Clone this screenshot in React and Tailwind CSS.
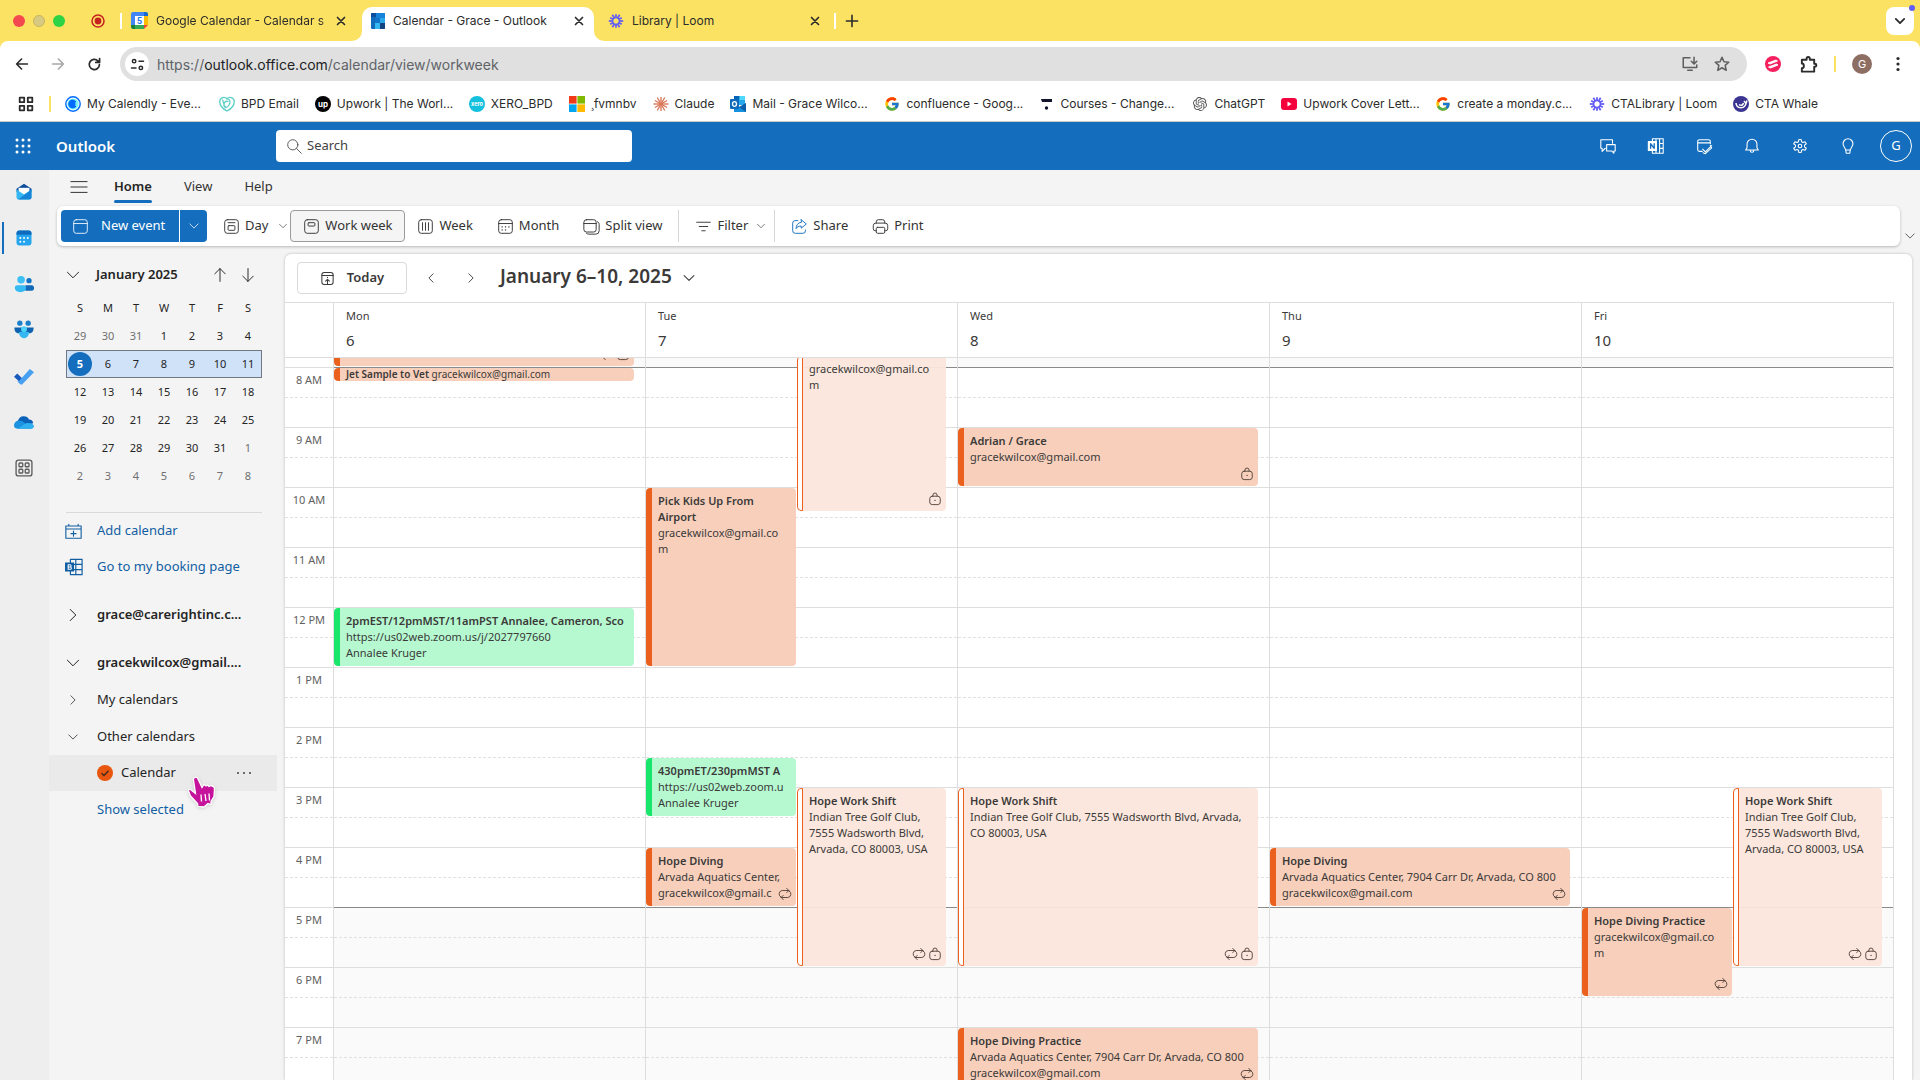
import { FcGoogle } from 'react-icons/fc';
import { SiOpenai } from 'react-icons/si';

// ---------- small shared svg helpers ----------

function Line({ size = 20, sw = 1, className = '', children }) {
    return (
        <svg width={size} height={size} viewBox="0 0 20 20" fill="none" stroke="currentColor" strokeWidth={sw} strokeLinecap="round" strokeLinejoin="round" className={`shrink-0 ${className}`} aria-hidden="true">
            {children}
        </svg>
    );
}

const Chevron = ({ dir = 'down', size = 16, sw = 1.25, className = '' }) => (
    <Line size={size} sw={sw} className={className}>
        {dir === 'down' && <path d="M3 6.5l7 7 7-7" />}
        {dir === 'right' && <path d="M6.5 3l7 7-7 7" />}
        {dir === 'left' && <path d="M13.5 3l-7 7 7 7" />}
    </Line>
);

const Cross = () => (
    <Line size={14} sw={2.4}><path d="M5 5l10 10M15 5L5 15" /></Line>
);

function Burst({ color, rays = 12, inner = 3.6, outer = 9, sw = 2.2, ring = false, size = 16 }) {
    return (
        <svg width={size} height={size} viewBox="-10 -10 20 20" stroke={color} strokeWidth={sw} fill="none" className="shrink-0" aria-hidden="true">
            {Array.from({ length: rays }, (_, i) => (
                <path key={i} d={`M0 ${-inner}V${i % 2 ? -outer : -outer + 0.6}`} transform={`rotate(${(i * 360) / rays})`} />
            ))}
            {ring && <circle r="4.3" strokeWidth="1.8" />}
        </svg>
    );
}

const LoomIcon = () => <Burst color="#625df5" ring />;
const ClaudeIcon = () => <Burst color="#d97757" inner={0} outer={9.4} sw={1.7} />;

const GoogleCalIcon = () => (
    <svg width="17" height="17" viewBox="0 0 17 17" className="shrink-0" aria-hidden="true">
        <path d="M0 2a2 2 0 012-2h11v4H4v9H0z" fill="#4285f4" />
        <path d="M13 0h2a2 2 0 012 2v2h-4z" fill="#1967d2" />
        <path d="M13 4h4v9h-4z" fill="#fbbc04" />
        <path d="M4 13h9v4H4z" fill="#34a853" />
        <path d="M0 13h4v4H2a2 2 0 01-2-2z" fill="#188038" />
        <path d="M13 13h4l-4 4z" fill="#ea4335" />
        <path d="M4 4h9v9H4z" fill="#fff" />
        <text x="8.5" y="11.8" textAnchor="middle" fontSize="9" fontWeight="700" fill="#1a73e8" fontFamily="Roboto, sans-serif">5</text>
    </svg>
);

const OutlookCalTabIcon = () => (
    <svg width="14" height="16" viewBox="0 0 14 16" className="shrink-0" aria-hidden="true">
        <rect width="14" height="16" rx="1" fill="#0f6cbd" />
        <path d="M0 1a1 1 0 011-1h4v4H0z" fill="#0a4f9e" />
        <path d="M5 0h8a1 1 0 011 1v4H5z" fill="#1683d8" />
        <path d="M9 5h5v5H9z" fill="#28a8ea" />
        <path d="M4 5h5v5H4z" fill="#1274c9" />
        <path d="M4 10h5v6H4z" fill="#35b8f1" />
        <path d="M9 10h5v5a1 1 0 01-1 1H9z" fill="#14447d" />
    </svg>
);

const CalendlyIcon = () => (
    <svg width="16" height="16" viewBox="0 0 16 16" fill="none" className="shrink-0" aria-hidden="true">
        <circle cx="8" cy="8" r="7.2" stroke="#006bff" strokeWidth="1.4" />
        <circle cx="8" cy="8" r="5.6" fill="#0ae8f0" opacity=".55" />
        <path d="M10.4 9.8A3.3 3.3 0 1110.4 6.2" fill="#006bff" stroke="#006bff" strokeWidth="2.2" />
    </svg>
);

const BpdIcon = () => (
    <svg width="16" height="16" viewBox="0 0 16 16" fill="none" stroke="#5ccfc6" strokeWidth="1.3" className="shrink-0" aria-hidden="true">
        <path d="M8 15C2 12 .6 8 .8 5A4 4 0 018 3a4 4 0 017.2 2c.2 3-1.2 7-7.2 10z" />
        <path d="M9.5 5.5c-3-1-5 1-4.5 4s3.5 2 5-.5 1.5-5-1-6M3.5 3.5c1 2 .5 5 3.5 8.5" />
    </svg>
);

const Badge = ({ bg, size, children, y = 11 }) => (
    <svg width="16" height="16" viewBox="0 0 16 16" className="shrink-0" aria-hidden="true">
        <circle cx="8" cy="8" r="8" fill={bg} />
        <text x="8" y={y} textAnchor="middle" fontSize={size} fontWeight="700" fill="#fff" fontFamily="Inter, sans-serif">{children}</text>
    </svg>
);

const MicrosoftIcon = () => (
    <svg width="16" height="16" viewBox="0 0 16 16" className="shrink-0" aria-hidden="true">
        <path d="M0 0h7.6v7.6H0z" fill="#f03a17" />
        <path d="M8.4 0H16v7.6H8.4z" fill="#7fba00" />
        <path d="M0 8.4h7.6V16H0z" fill="#00a4ef" />
        <path d="M8.4 8.4H16V16H8.4z" fill="#ffb900" />
    </svg>
);

const OutlookMailIcon = () => (
    <svg width="16" height="16" viewBox="0 0 16 16" className="shrink-0" aria-hidden="true">
        <path d="M4 0h11v9H4z" fill="#28a8ea" />
        <path d="M4 0h5.5v4H4z" fill="#0364b8" />
        <path d="M9.5 0H15v4H9.5z" fill="#50d9ff" />
        <path d="M4 8l6 3 6-4v9H4z" fill="#1490df" />
        <path d="M16 7v9l-7-5z" fill="#0f5fa8" />
        <rect y="3" width="9" height="10" rx="1" fill="#0f6cbd" />
        <ellipse cx="4.5" cy="8" rx="2" ry="2.4" fill="none" stroke="#fff" strokeWidth="1.3" />
    </svg>
);

const ChangeIcon = () => (
    <svg width="16" height="16" viewBox="0 0 16 16" className="shrink-0" aria-hidden="true">
        <path d="M3 3h11v3H4z" fill="#12142b" />
        <circle cx="8.5" cy="12" r="1.7" fill="#12142b" />
    </svg>
);

const YoutubeIcon = () => (
    <svg width="16" height="16" viewBox="0 0 16 16" className="shrink-0" aria-hidden="true">
        <rect y="2" width="16" height="12" rx="3" fill="#f5003c" />
        <path d="M6.5 5.5v5l4-2.5z" fill="#fff" />
    </svg>
);

const WhaleIcon = () => (
    <svg width="16" height="16" viewBox="0 0 16 16" className="shrink-0" aria-hidden="true">
        <circle cx="8" cy="8" r="8" fill="#3b3591" />
        <path d="M3 7c.5 6 9 6.5 10 0M11 5l2 2.5 1-3M6 8.5c2 1.5 4 1 4.5-1.5" stroke="#fff" strokeWidth="1.5" fill="none" />
    </svg>
);

// ---------- browser chrome ----------

const bookmarks = [
    { label: 'My Calendly - Eve...', icon: <CalendlyIcon />, wide: true },
    { label: 'BPD Email', icon: <BpdIcon /> },
    { label: 'Upwork | The Worl...', icon: <Badge bg="#000" size="8" y="10.5">up</Badge>, wide: true },
    { label: 'XERO_BPD', icon: <Badge bg="#13c0de" size="5.5" y="10">xero</Badge> },
    { label: '¸fvmnbv', icon: <MicrosoftIcon /> },
    { label: 'Claude', icon: <ClaudeIcon /> },
    { label: 'Mail - Grace Wilco...', icon: <OutlookMailIcon />, wide: true },
    { label: 'confluence - Goog...', icon: <FcGoogle size={16} className="shrink-0" />, wide: true },
    { label: 'Courses - Change...', icon: <ChangeIcon />, wide: true },
    { label: 'ChatGPT', icon: <SiOpenai size={14} className="mx-px shrink-0 text-[#555]" /> },
    { label: 'Upwork Cover Lett...', icon: <YoutubeIcon />, wide: true },
    { label: 'create a monday.c...', icon: <FcGoogle size={16} className="shrink-0" />, wide: true },
    { label: 'CTALibrary | Loom', icon: <LoomIcon /> },
    { label: 'CTA Whale', icon: <WhaleIcon /> },
];

function TabStrip() {
    return (
        <div className="flex h-[41px] items-center bg-[#fce263] text-[12px] text-[#2b2b2b]">
            <div className="flex w-[88px] gap-2 pl-[13px]">
                <span className="size-3 rounded-full bg-[#f4494f]" />
                <span className="size-3 rounded-full border border-[#c4b560] bg-[#d9ca83]" />
                <span className="size-3 rounded-full bg-[#2bd345]" />
            </div>
            <svg width="20" height="20" viewBox="0 0 20 20" aria-hidden="true">
                <circle cx="10" cy="10" r="6" fill="none" stroke="#c5221f" strokeWidth="1.5" />
                <circle cx="10" cy="10" r="3.4" fill="#c5221f" />
            </svg>
            <div className="ml-3 h-4 w-0.5 bg-white" />
            <div className="flex w-[240px] items-center pl-[9px] pr-[14px]">
                <GoogleCalIcon />
                <span className="ml-2 flex-1 whitespace-nowrap mask-r-from-92%">Google Calendar - Calendar s</span>
                <button aria-label="Close tab"><Cross /></button>
            </div>
            <div className="relative flex h-[34px] w-[232px] items-center self-end rounded-t-[10px] bg-white pb-1.5 pl-[9px] pr-2">
                <svg width="10" height="10" className="absolute bottom-0 right-full" aria-hidden="true"><path d="M10 0v10H0A10 10 0 0010 0z" fill="#fff" /></svg>
                <svg width="10" height="10" className="absolute bottom-0 left-full" aria-hidden="true"><path d="M0 0v10h10A10 10 0 010 0z" fill="#fff" /></svg>
                <OutlookCalTabIcon />
                <span className="ml-2 flex-1 whitespace-nowrap">Calendar - Grace - Outlook</span>
                <button aria-label="Close tab"><Cross /></button>
            </div>
            <div className="flex w-[240px] items-center pl-[14px] pr-3">
                <LoomIcon />
                <span className="ml-2 flex-1 whitespace-nowrap">Library | Loom</span>
                <button aria-label="Close tab"><Cross /></button>
            </div>
            <div className="h-4 w-0.5 bg-white" />
            <button className="ml-2" aria-label="New tab"><Line size={16} sw={2}><path d="M10 3v14M3 10h14" /></Line></button>
            <button className="relative ml-auto mr-1.5 flex size-7 items-center justify-center rounded-lg bg-white" aria-label="Search tabs">
                <Chevron size={12} sw={3} />
                <span className="absolute -right-px -top-0.5 size-1.5 rounded-full bg-[#625df5]" />
            </button>
        </div>
    );
}

function AddressBar() {
    return (
        <div className="bg-[#fce263]">
            <div className="flex h-[46px] items-center rounded-t-lg bg-white text-[#2b2b2b]">
                <button className="ml-3 flex w-5 justify-center" aria-label="Back"><Line size={18} sw={1.8}><path d="M16 10H4M9.5 4.5L4 10l5.5 5.5" /></Line></button>
                <button className="ml-4 flex w-5 justify-center text-[#a8a8a8]" aria-label="Forward"><Line size={18} sw={1.8}><path d="M4 10h12M10.5 4.5L16 10l-5.5 5.5" /></Line></button>
                <button className="ml-4 flex w-5 justify-center" aria-label="Reload"><Line size={17} sw={2}><path d="M15.8 10a6 6 0 11-1.9-4.4L16 7.5M16 3v4.5h-4.5" /></Line></button>
                <div className="ml-4 flex h-[34px] flex-1 items-center rounded-full bg-[#e0e0e0] pl-[5px] pr-3.5">
                    <button className="flex size-6 items-center justify-center rounded-full bg-white" aria-label="Site information">
                        <Line size={15} sw={2}><circle cx="5.5" cy="5.5" r="2.3" /><path d="M12 5.5h6M2 14.5h6" /><circle cx="14.5" cy="14.5" r="2.3" /></Line>
                    </button>
                    <input aria-label="Address" className="sr-only" readOnly value="https://outlook.office.com/calendar/view/workweek" />
                    <span className="ml-2 flex-1 whitespace-nowrap text-[14px] text-[#5f6368]">https://<span className="text-[#202124]">outlook.office.com</span>/calendar/view/workweek</span>
                    <Line size={18} sw={1.7} className="mr-3.5 text-[#5f5f5f]"><path d="M10 3H2.5v11h15v-3M7.5 17h5M14.5 2.5v7M11.5 7l3 3 3-3" /></Line>
                    <Line size={18} sw={1.7} className="mr-0.5 text-[#5f5f5f]"><path d="M10 2.5l2.2 5 5.3.5-4 3.6 1.2 5.4-4.7-2.8L5.3 17l1.2-5.4-4-3.6 5.3-.5z" /></Line>
                </div>
                <svg width="16" height="16" viewBox="0 0 16 16" className="ml-[18px]" aria-hidden="true">
                    <circle cx="8" cy="8" r="8" fill="#f5205e" />
                    <path d="M3 7l8-3 1.5 1L5 8zM3.5 11l8-3 1.5 1-7.5 3z" fill="#fff" stroke="#fff" strokeWidth=".9" />
                </svg>
                <Line size={19} sw={2} className="ml-[18px]"><path d="M3 5h5V3.8a1.7 1.7 0 013.4 0V5H16v4.2h.7a1.6 1.6 0 010 3.2H16V17.5H3V14c2.8 0 2.8-5 0-5z" /></Line>
                <div className="ml-4 h-4 w-0.5 bg-[#fce263]" />
                <button className="ml-4 size-5 rounded-full bg-[#8d6e63] text-[11px] text-white">G</button>
                <button className="ml-4 mr-3 flex w-5 justify-center" aria-label="Browser menu">
                    <svg width="4" height="16" fill="currentColor"><circle cx="2" cy="2.5" r="1.6" /><circle cx="2" cy="8" r="1.6" /><circle cx="2" cy="13.5" r="1.6" /></svg>
                </button>
            </div>
        </div>
    );
}

function BookmarkBar() {
    return (
        <nav className="flex h-[35px] items-center border-b border-[#cfc9c4] bg-white text-[12px] text-[#2b2b2b]" aria-label="Bookmarks">
            <Line size={18} sw={2} className="ml-[17px]"><path d="M3 3h5v5H3zM12 3h5v5h-5zM3 12h5v5H3zM12 12h5v5h-5z" /></Line>
            <div className="mx-3.5 h-4 w-0.5 bg-[#fce263]" />
            {bookmarks.map((b) => (
                <a key={b.label} href="#" className={`flex items-center gap-1.5 whitespace-nowrap ${b.wide ? 'w-[154px]' : 'pr-4'}`}>
                    {b.icon}
                    <span>{b.label}</span>
                </a>
            ))}
        </nav>
    );
}

// ---------- outlook header and ribbon ----------

const headerIcons = [
    ['Teams chat', <><path d="M2 3h13v4M2 3v9.5h1.5V16l3.5-3.5" /><path d="M8.5 8.5H18v7h-1.5V18L14 15.5H8.5z" /></>],
    ['OneNote feed', <><path d="M6 2h12v16H6zM14 2v16M14 7.3h4M14 12.6h4M10 2v3M10 15v3" /><rect x="1.5" y="5" width="9" height="10" fill="#fff" /><path d="M4 12.5v-5l4 5v-5" stroke="#146ebd" strokeWidth="1.5" /></>],
    ['My day', <><path d="M17 7.5V5a2 2 0 00-2-2H5a2 2 0 00-2 2v9a2 2 0 002 2h3M3 6.5h14" /><path d="M8.5 13.5l3 3 7-7M9 17.5l2.5 1 7-6.5-1.500-2.500" /></>],
    ['Notifications', <><path d="M3 14.5h14L15.5 12V8a5.5 5.5 0 00-11 0v4zM8 15a2 2 0 004 0" /></>],
    ['Settings', <><path d="M8.3 4.3L8.7 1.8h2.6l.4 2.5 1.5.9 2.4-1 1.4 2.3-2 1.6v1.8l2 1.6-1.4 2.3-2.4-.9-1.5.8-.4 2.5H8.7l-.4-2.5-1.5-.8-2.4.9L3 11.500l2-1.600V8.100l-2-1.600 1.400-2.300 2.400 1z" transform="translate(0 1)" /><circle cx="10" cy="10" r="2" /></>],
    ['Tips', <><path d="M7.5 14.5C7 12 4.5 10.5 4.5 7.5a5.5 5.5 0 0111 0c0 3-2.5 4.5-3 7zM7.5 14.5l.5 3.5h4l.5-3.5" /></>],
];

function SuiteHeader() {
    return (
        <header className="flex h-12 items-center bg-[#146ebd] text-white">
            <button className="ml-3 mr-[22px] flex w-[22px] justify-center" aria-label="App launcher">
                <svg width="16" height="16" fill="currentColor">
                    {[2, 8, 14].map((y) => [2, 8, 14].map((x) => <circle key={`${x}-${y}`} cx={x} cy={y} r="1.5" />))}
                </svg>
            </button>
            <a href="#" className="w-[220px] text-[15px] font-semibold">Outlook</a>
            <label className="flex h-8 w-[356px] items-center rounded bg-white px-2.5 text-[#424242]">
                <Line size={17}><circle cx="8" cy="8" r="6" /><path d="M12.5 12.5L18 18" /></Line>
                <input placeholder="Search" aria-label="Search" className="ml-1 w-full bg-transparent text-[13px] outline-none placeholder:text-[#424242]" />
            </label>
            <div className="ml-auto flex items-center">
                {headerIcons.map(([name, icon]) => (
                    <button key={name} aria-label={name} className="flex h-12 w-12 items-center justify-center"><Line size={18} sw={1.2}>{icon}</Line></button>
                ))}
                <button className="mx-2 size-8 rounded-full border border-white text-[13px]">G</button>
            </div>
        </header>
    );
}

const ribbonIcons = {
    event: <><rect x="2" y="2" width="16" height="16" rx="3" /><path d="M2 6.5h16" /></>,
    day: <><rect x="2" y="2" width="16" height="16" rx="3" /><path d="M6 5.5h8" /><rect x="6" y="9" width="8" height="5.5" rx="1" /></>,
    workweek: <><rect x="2" y="2" width="16" height="16" rx="3" /><rect x="6" y="5.5" width="8" height="4" rx="1" /></>,
    week: <><rect x="2" y="2" width="16" height="16" rx="3" /><path d="M6.5 5.5v9M10 5.5v9M13.5 5.5v9" /></>,
    month: <><rect x="2" y="2" width="16" height="16" rx="3" /><path d="M2 6.5h16" /><path strokeWidth="1.6" d="M6 10.5h.1M10 10.5h.1M14 10.5h.1M6 14h.1M10 14h.1" /></>,
    split: <><rect x="1" y="2" width="14.5" height="14.5" rx="3" /><path d="M1 6.5h14.5M17 4.5c1.5.5 2 1.5 2 3V15a4 4 0 01-4 4H7c-1.5 0-2.5-.5-3-1" /></>,
    filter: <path d="M2 5h16M5 10h10M8 15h4" />,
    share: <><path d="M8 3H5a3 3 0 00-3 3v9a3 3 0 003 3h9a3 3 0 003-3v-1" /><path d="M12 2l6 5-6 5V9.5c-3 0-5 1-6 3 0-4 2-7 6-7.5z" /></>,
    print: <><path d="M5 6V4.5A2.5 2.5 0 017.5 2h5A2.5 2.5 0 0115 4.5V6" /><path d="M5 15H4a2.5 2.5 0 01-2.5-2.5V9A3 3 0 014.5 6h11a3 3 0 013 3v3.5A2.5 2.5 0 0116 15h-1" /><rect x="5" y="11" width="10" height="7" rx="1.5" /></>,
};

function RibbonButton({ icon, label, className = '', iconClass = '', children }) {
    return (
        <button className={`flex h-8 items-center whitespace-nowrap ${className}`}>
            <Line size={17} sw={1.1} className={iconClass}>{ribbonIcons[icon]}</Line>
            <span className="ml-[5px]">{label}</span>
            {children}
        </button>
    );
}

function Ribbon() {
    return (
        <div className="text-[13px] text-[#333]">
            <div className="flex h-9 items-center pb-0.5 pl-[21px]">
                <button aria-label="Toggle sidebar" className="mr-[26px]"><Line size={18} sw={1.1}><path d="M1 4h18M1 10h18M1 16h18" /></Line></button>
                <button className="mr-8 flex h-8 flex-col justify-between pt-1.5 font-semibold text-[#242424]">
                    Home
                    <span className="h-[3px] w-full rounded bg-[#146ebd]" />
                </button>
                <button className="mr-8">View</button>
                <button>Help</button>
            </div>
            <div className="flex items-end">
                <div className="ml-2 flex h-10 flex-1 items-center rounded-md bg-white pl-1 shadow-[0_1px_3px_rgba(0,0,0,0.25)]">
                    <div className="mr-3.5 flex h-8 overflow-hidden rounded bg-[#146ebd] text-white">
                        <button className="flex w-[118px] items-center gap-3 pl-[11px]"><Line size={17}>{ribbonIcons.event}</Line>New event</button>
                        <button aria-label="More new items" className="flex w-7 items-center justify-center border-l border-white"><Chevron size={12} /></button>
                    </div>
                    <RibbonButton icon="day" label="Day" className="mr-0.5 pl-0.5"><Chevron size={10} className="ml-2.5" /></RibbonButton>
                    <RibbonButton icon="workweek" label="Work week" className="mr-3 w-[115px] justify-center rounded border border-[#9a9a9a] bg-[#f5f5f5]" />
                    <RibbonButton icon="week" label="Week" className="mr-6" />
                    <RibbonButton icon="month" label="Month" className="mr-6" />
                    <RibbonButton icon="split" label="Split view" className="mr-4" />
                    <div className="h-8 w-px bg-[#d6d6d6]" />
                    <RibbonButton icon="filter" label="Filter" className="ml-4 mr-2"><Chevron size={10} className="ml-2" /></RibbonButton>
                    <div className="h-8 w-px bg-[#d6d6d6]" />
                    <RibbonButton icon="share" label="Share" className="ml-4 mr-6" iconClass="text-[#146ebd]" />
                    <RibbonButton icon="print" label="Print" />
                </div>
                <button aria-label="Ribbon options" className="flex w-5 justify-center pb-1"><Chevron size={12} /></button>
            </div>
        </div>
    );
}

// ---------- left rail ----------

const railItems = [
    ['Mail', <>
        <path d="M3 8l9-6 9 6v4H3z" fill="#0f4f9e" /><path d="M5.5 7h13v7h-13z" fill="#fff" />
        <path d="M3 9l9 6 9-6v9a3 3 0 01-3 3H6a3 3 0 01-3-3z" fill="#33b6f2" /><path d="M21 9v9a3 3 0 01-3 3H5z" fill="#1685d8" />
    </>],
    ['Calendar', <>
        <rect x="3" y="3" width="18" height="18" rx="3.5" fill="#26a5ee" /><path d="M3 8V6.5A3.5 3.5 0 016.5 3h11A3.5 3.5 0 0121 6.5V8z" fill="#0f6cbd" />
        <path d="M7.5 12h.1M12 12h.1M16.5 12h.1M7.5 16.5h.1M12 16.5h.1" stroke="#fff" strokeWidth="2.2" strokeLinecap="round" />
    </>],
    ['People', <>
        <circle cx="8.5" cy="7" r="4.5" fill="#3cc0f5" /><circle cx="18" cy="8" r="3.2" fill="#1274c4" />
        <rect x="12" y="13.5" width="12" height="6.5" rx="3" fill="#1169b8" /><path d="M1 16.5a3 3 0 013-3h7.500a3 3 0 013 3c0 7-13.500 7-13.500 0z" fill="#36baf3" />
    </>],
    ['Groups', <>
        <circle cx="7" cy="3.8" r="3.2" fill="#1a7fcc" /><circle cx="17" cy="3.8" r="3.2" fill="#1a7fcc" />
        <path d="M.5 9h23c0 5-2 7-5.500 7h-12C2.500 16 .5 14 .5 9z" fill="#0f62b0" /><circle cx="12" cy="11" r="3.6" fill="#4fd2fa" />
        <path d="M6 14.5h12c0 10-12 10-12 0z" fill="#35b8f1" />
    </>],
    ['To Do', <>
        <path d="M0 13l4-4 6 6-3.500 4z" fill="#195abd" /><path d="M6 18L19 3.500l5 4L10 22a2 2 0 01-2.500 0L4 18.500z" fill="#48a0f0" />
    </>],
    ['OneDrive', <>
        <path d="M5 10A7 7 0 0118 9a5 5 0 015 4.5L12 17 2 13z" fill="#0c62b8" /><path d="M0 16A5.500 5.500 0 016 10.500c2.500-.5 4 .5 5.500 1.500l10 8H4a4 4 0 01-4-4z" fill="#1b93e0" />
        <path d="M11 15.500c5-4 12-2 13 1 0 2-1 3.500-3 3.500H5z" fill="#30b0ef" />
    </>],
    ['More apps', <g fill="none" stroke="#5c5c5c" strokeWidth="1.6">
        <rect x="2.5" y="2.5" width="19" height="19" rx="3" />
        <rect x="6" y="6" width="4.5" height="4.5" rx="1" /><rect x="13.5" y="6" width="4.5" height="4.5" rx="1" />
        <rect x="6" y="13.5" width="4.5" height="4.5" rx="1" /><rect x="13.5" y="13.5" width="4.5" height="4.5" rx="1" />
    </g>],
];

function AppRail() {
    return (
        <nav className="flex w-[49px] shrink-0 flex-col bg-[#eeeeee]" aria-label="Apps">
            {railItems.map(([name, icon], i) => (
                <a key={name} href="#" aria-label={name} className="flex h-[46px] items-center pb-0.5 pl-0.5">
                    <span className={i === 1 ? 'h-8 w-0.5 bg-[#146ebd]' : 'h-8 w-0.5'} />
                    <svg width="20" height="20" viewBox="0 0 24 24" className="ml-2.5">{icon}</svg>
                </a>
            ))}
        </nav>
    );
}

// ---------- sidebar ----------

const weeks = [
    [29, 30, 31, 1, 2, 3, 4],
    [5, 6, 7, 8, 9, 10, 11],
    [12, 13, 14, 15, 16, 17, 18],
    [19, 20, 21, 22, 23, 24, 25],
    [26, 27, 28, 29, 30, 31, 1],
    [2, 3, 4, 5, 6, 7, 8],
];

const isOutside = (row, day) => (row === 0 && day > 20) || (row > 3 && day < 10);

function MiniCalendar() {
    return (
        <section className="px-4">
            <div className="flex h-12 items-center pt-2.5 text-[#242424]">
                <Chevron size={16} sw={1.2} />
                <span className="ml-[15px] text-[13px] font-semibold">January 2025</span>
                <button aria-label="Previous month" className="ml-auto mr-3"><Line size={16} sw={1.2}><path d="M10 18V2M3.5 8.5L10 2l6.5 6.5" /></Line></button>
                <button aria-label="Next month" className="mr-[13px]"><Line size={16} sw={1.2}><path d="M10 2v16M3.5 11.5L10 18l6.5-6.5" /></Line></button>
            </div>
            <table className="ml-px w-[196px] table-fixed border-collapse text-center text-[11px] text-[#242424]">
                <thead>
                    <tr className="h-7">
                        {['S', 'M', 'T', 'W', 'T', 'F', 'S'].map((d, i) => <th key={i} className="p-0 font-normal">{d}</th>)}
                    </tr>
                </thead>
                <tbody>
                    {weeks.map((week, r) => (
                        <tr key={r} className={r === 1 ? 'h-7 bg-[#d0e2f8] outline outline-1 -outline-offset-1 outline-[#707880]' : 'h-7'}>
                            {week.map((day) => (
                                <td key={day} className={isOutside(r, day) ? 'p-0 text-[#707070]' : 'p-0'}>
                                    {r === 1 && day === 5
                                        ? <span className="mx-auto flex size-6 items-center justify-center rounded-full bg-[#146ebd] font-bold text-white">5</span>
                                        : day}
                                </td>
                            ))}
                        </tr>
                    ))}
                </tbody>
            </table>
        </section>
    );
}

function Sidebar() {
    return (
        <aside className="relative w-[236px] shrink-0 text-[13px] text-[#242424]">
            <MiniCalendar />
            <div className="mx-[17px] mt-[22px] w-[196px] border-t border-[#d9d9d9]" />
            <a href="#" className="flex h-9 items-center pl-4 text-[#115ea3]">
                <Line size={17} sw={1.3}><path d="M1 3.5h18V18H1zM1 7h18M4.5 1.5v2M15.5 1.5v2M10 9.5v6M7 12.5h6" /></Line>
                <span className="ml-[15px]">Add calendar</span>
            </a>
            <a href="#" className="flex h-9 items-center pl-4 text-[#115ea3]">
                <Line size={18} sw={1.3}>
                    <path d="M6 1.5h13v17H6zM12 1.5v17M6 7h13M6 13h13" />
                    <path d="M0 5h10v10H0z" fill="currentColor" stroke="none" />
                    <path d="M3.5 7.5h2a1.2 1.2 0 010 2.5h-2zM3.5 10h2.3a1.2 1.2 0 010 2.5H3.5z" stroke="#fff" strokeWidth="1.2" />
                </Line>
                <span className="ml-3.5 whitespace-nowrap">Go to my booking page</span>
            </a>
            <button className="mt-3 flex h-9 w-full items-center pl-4 font-semibold">
                <Chevron dir="right" size={16} /><span className="ml-4">grace@carerightinc.c...</span>
            </button>
            <button className="mt-3 flex h-9 w-full items-center pl-4 font-semibold">
                <Chevron size={16} /><span className="ml-4">gracekwilcox@gmail....</span>
            </button>
            <button className="flex h-[37px] w-full items-center pl-[18px]">
                <Chevron dir="right" size={12} /><span className="ml-[18px]">My calendars</span>
            </button>
            <button className="flex h-[37px] w-full items-center pl-[18px]">
                <Chevron size={12} /><span className="ml-[18px]">Other calendars</span>
            </button>
            <div className="mr-2 flex h-9 items-center bg-[#eaeaea] pl-12">
                <label className="flex items-center gap-2">
                    <span className="relative flex size-4">
                        <input type="checkbox" defaultChecked className="size-4 appearance-none rounded-full bg-[#e8560f]" />
                        <svg width="16" height="16" viewBox="0 0 16 16" className="pointer-events-none absolute inset-0" fill="none" stroke="#3b2a20" strokeWidth="1.3"><path d="M4.5 8.2l2.5 2.3 4.5-4.7" /></svg>
                    </span>
                    Calendar
                </label>
                <button aria-label="More options" className="ml-auto mr-[25px]">
                    <svg width="16" height="4" fill="#424242"><circle cx="2" cy="2" r="1" /><circle cx="8" cy="2" r="1" /><circle cx="14" cy="2" r="1" /></svg>
                </button>
            </div>
            <button className="flex h-[37px] items-center pl-12 text-[#115ea3]">Show selected</button>
            {/* pointer */}
            <svg width="28" height="32" viewBox="0 0 28 32" className="absolute left-[139px] top-[530px] drop-shadow" aria-hidden="true">
                <path d="M7 1.5c1.5-.7 2.500.2 3 1.500l4 8.500 2-3 2 1.500 1.500-1 1.500 1.500 2-1c2 .5 3.500 1.500 3.500 3l-.5 8-3 5v3l-3-1-4 3.500-6-.5-.5-3-7-7.500-2-5c0-1.500 1-2 2-1.500l5 4L5.500 4c-.3-1.300.3-2.100 1.500-2.500z" fill="#c5149b" stroke="#fff" strokeWidth="1.3" />
                <path d="M13 18.500l.5 7M17 18l1 7M21 17.500l.5 7" stroke="#fff" strokeWidth="1.3" />
            </svg>
        </aside>
    );
}

// ---------- calendar grid ----------

const HOUR = 60;
const FIRST_LINE = 9;
const mail = 'gracekwilcox@gmail.com';
const wrapMail = ['gracekwilcox@gmail.co', 'm'];
const aquatics = 'Arvada Aquatics Center, 7904 Carr Dr, Arvada, CO 800';

const days = [
    { name: 'Mon', date: 6, events: [
        { start: 7.5, end: 8, kind: 'busy', lock: true, repeat: true, lines: [] },
        { start: 8, end: 8.25, kind: 'busy', compact: true, title: 'Jet Sample to Vet', lines: [mail] },
        { start: 12, end: 13, kind: 'green', title: '2pmEST/12pmMST/11amPST Annalee, Cameron, Sco', lines: ['https://us02web.zoom.us/j/2027797660', 'Annalee Kruger'] },
    ] },
    { name: 'Tue', date: 7, events: [
        { start: 7.8, end: 10.4167, kind: 'tentative', side: 'right', lock: true, lines: wrapMail },
        { start: 10, end: 13, kind: 'busy', side: 'left', wrap: true, title: 'Pick Kids Up From Airport', lines: wrapMail },
        { start: 14.5, end: 15.5, kind: 'green', side: 'left', title: '430pmET/230pmMST A', lines: ['https://us02web.zoom.u', 'Annalee Kruger'] },
        { start: 16, end: 17, kind: 'busy', side: 'left', repeat: true, title: 'Hope Diving', lines: ['Arvada Aquatics Center,', 'gracekwilcox@gmail.c'] },
        { start: 15, end: 18, kind: 'tentative', side: 'right', repeat: true, lock: true, title: 'Hope Work Shift', lines: ['Indian Tree Golf Club,', '7555 Wadsworth Blvd,', 'Arvada, CO 80003, USA'] },
    ] },
    { name: 'Wed', date: 8, events: [
        { start: 9, end: 10, kind: 'busy', lock: true, title: 'Adrian / Grace', lines: [mail] },
        { start: 15, end: 18, kind: 'tentative', repeat: true, lock: true, title: 'Hope Work Shift', lines: ['Indian Tree Golf Club, 7555 Wadsworth Blvd, Arvada,', 'CO 80003, USA'] },
        { start: 19, end: 20, kind: 'busy', repeat: true, title: 'Hope Diving Practice', lines: [aquatics, mail] },
    ] },
    { name: 'Thu', date: 9, events: [
        { start: 16, end: 17, kind: 'busy', repeat: true, title: 'Hope Diving', lines: [aquatics, mail] },
    ] },
    { name: 'Fri', date: 10, events: [
        { start: 17, end: 18.5, kind: 'busy', side: 'left', repeat: true, title: 'Hope Diving Practice', lines: wrapMail },
        { start: 15, end: 18, kind: 'tentative', side: 'right', repeat: true, lock: true, title: 'Hope Work Shift', lines: ['Indian Tree Golf Club,', '7555 Wadsworth Blvd,', 'Arvada, CO 80003, USA'] },
    ] },
];

const hours = Array.from({ length: 12 }, (_, i) => i + 8);
const hourLabel = (h) => (h < 12 ? `${h} AM` : `${h === 12 ? 12 : h - 12} PM`);

const kindClass = {
    busy: 'bg-[#f8cfbb]',
    green: 'bg-[#b6f9d1]',
    tentative: 'bg-[#fbe6db]/95',
};

const barClass = {
    busy: 'bg-[#ec601d]',
    green: 'bg-[#17e66b]',
    tentative: 'border border-[#ec601d] bg-white',
};

const sideClass = {
    full: 'left-0 right-0',
    left: 'left-0 right-1/2',
    right: 'left-1/2 right-0 ml-px',
};

function CalEvent({ start, end, kind, side = 'full', title, lines, compact, lock, repeat, wrap }) {
    const top = FIRST_LINE + (start - 8) * HOUR + 1;
    const height = (end - start) * HOUR - 2;
    return (
        <article className={`absolute flex overflow-hidden rounded ${kindClass[kind]} ${sideClass[side]}`} style={{ top, height }}>
            <div className={`w-1.5 shrink-0 rounded-l ${barClass[kind]}`} />
            {compact ? (
                <p className="truncate pl-1.5 text-[10px] leading-[13px]"><b className="font-semibold">{title}</b> {lines[0]}</p>
            ) : (
                <div className="min-w-0 flex-1 overflow-hidden pl-1.5 pt-[5px] text-[11px] leading-4">
                    {title && <h3 className={wrap ? 'pr-4 font-semibold' : 'whitespace-nowrap font-semibold'}>{title}</h3>}
                    {lines.map((l) => <p key={l} className="whitespace-nowrap">{l}</p>)}
                </div>
            )}
            <div className="absolute bottom-[5px] right-1 flex gap-0.5 text-[#5b4a42]">
                {repeat && <Line size={14} sw={1.4}><path d="M4.5 14.5A5 5 0 016 5H15.5M12.5 2l3 3-3 3M15.5 5.5A5 5 0 0114 15H4.5M7.5 12l-3 3 3 3" /></Line>}
                {lock && <Line size={14} sw={1.4}><rect x="2.5" y="6" width="15" height="12" rx="3.5" /><path d="M7 6V4.5a3 3 0 016 0V6" /><path strokeWidth="2" d="M10 12h.1" /></Line>}
            </div>
        </article>
    );
}

function DayColumn({ events }) {
    return (
        <div className="relative min-w-0 flex-1 border-l border-[#dedede]">
            <div className="h-[9px] bg-[#fafafa]" />
            {hours.map((h) => (
                <div key={h} className={`h-[60px] border-t ${h === 8 || h === 17 ? 'border-[#8a8a8a]' : 'border-[#dedede]'} ${h >= 17 ? 'bg-[#fafafa]' : ''}`}>
                    <div className="h-[30px] border-b border-dashed border-[#e0e0e0]" />
                </div>
            ))}
            <div className="absolute inset-y-0 left-0 right-[11px]">
                {events.map((e, i) => <CalEvent key={i} {...e} />)}
            </div>
        </div>
    );
}

function CalendarPanel() {
    return (
        <main className="mr-2 mt-2 flex min-w-0 flex-1 flex-col overflow-hidden rounded-t-md bg-white text-[#3b3a39] shadow-[0_0_3px_rgba(0,0,0,0.25)]">
            <div className="flex h-12 shrink-0 items-center pl-3">
                <button className="flex h-8 w-[110px] items-center justify-center gap-3 rounded border border-[#d9d9d9] text-[13px] font-semibold">
                    <Line size={15} sw={1.4}><rect x="2.5" y="2" width="15" height="16" rx="3" /><path d="M2.5 6h15M10 18v-7M7.5 13.5L10 11l2.5 2.5M10 8.5h.1" /></Line>
                    Today
                </button>
                <button aria-label="Previous week" className="ml-[18px]"><Chevron dir="left" size={12} sw={1.5} /></button>
                <button aria-label="Next week" className="ml-7"><Chevron dir="right" size={12} sw={1.5} /></button>
                <button className="ml-[23px] flex items-center gap-2.5 pb-1 text-[19px] font-semibold">January 6–10, 2025 <Chevron size={14} sw={1.5} className="mt-1" /></button>
            </div>
            <div className="mr-[18px] flex min-h-0 flex-1 flex-col border-t border-[#dedede]">
                <div className="flex shrink-0 border-b border-r border-[#dedede]">
                    <div className="w-12" />
                    {days.map((d) => (
                        <div key={d.name} className="h-[54px] min-w-0 flex-1 border-l border-[#dedede] pl-3 pt-1">
                            <div className="text-[11px] leading-[18px]">{d.name}</div>
                            <div className="pt-[3px] text-[15px] leading-6">{d.date}</div>
                        </div>
                    ))}
                </div>
                <div className="relative min-h-0 flex-1 overflow-hidden border-r border-[#dedede]">
                    <div className="absolute inset-x-0 top-0 flex">
                        <div className="w-12 text-center text-[11px] text-[#616161]">
                            <div className="h-[9px]" />
                            {hours.map((h) => (
                                <div key={h} className="h-[60px] border-t border-[#dedede]">
                                    <div className="h-[30px] border-b border-dashed border-[#e0e0e0] leading-6">{hourLabel(h)}</div>
                                </div>
                            ))}
                        </div>
                        {days.map((d) => <DayColumn key={d.name} events={d.events} />)}
                    </div>
                </div>
            </div>
        </main>
    );
}

export default function App() {
    return (
        <div className="flex h-screen flex-col overflow-hidden bg-[#f4f4f4] font-['Segoe_UI','Noto_Sans',sans-serif]">
            <div className="shrink-0 font-['Inter',sans-serif]">
                <TabStrip />
                <AddressBar />
                <BookmarkBar />
            </div>
            <SuiteHeader />
            <div className="flex min-h-0 flex-1">
                <AppRail />
                <div className="flex min-w-0 flex-1 flex-col">
                    <Ribbon />
                    <div className="flex min-h-0 flex-1">
                        <Sidebar />
                        <CalendarPanel />
                    </div>
                </div>
            </div>
        </div>
    );
}
